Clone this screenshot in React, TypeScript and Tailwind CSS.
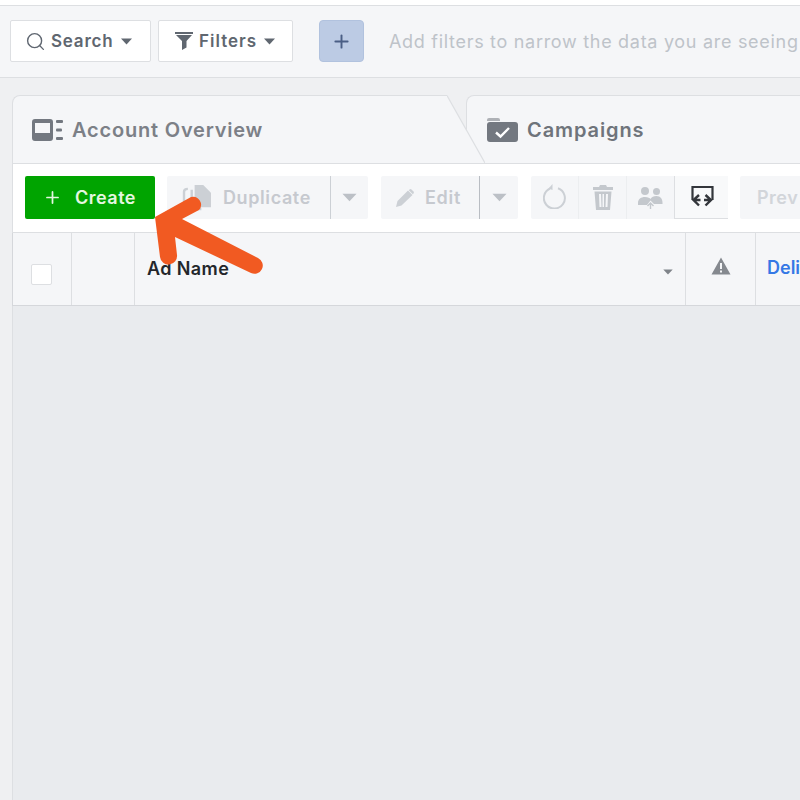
import { Search, Plus } from "lucide-react";

function Caret({ className = "" }: { className?: string }) {
  return (
    <svg viewBox="0 0 12 7" className={className} fill="currentColor">
      <path d="M0.5 0.5h11L6 6.5z" />
    </svg>
  );
}

export default function App() {
  return (
    <div className="relative w-[800px] h-[800px] overflow-hidden bg-[#eff0f2] font-['Inter','Liberation_Sans',sans-serif]">
      <div className="h-[5px] bg-white" />
      {/* filter bar */}
      <div className="h-[73px] bg-[#f5f6f8] border-y border-[#dddfe2] flex items-center pl-[10px] pb-[1px] whitespace-nowrap">
        <button className="w-[141px] h-[42px] shrink-0 bg-white border border-[#dddfe2] rounded-[2px] flex items-center pl-[14px] text-[#606770]">
          <Search className="w-[21px] h-[21px] text-[#5f6670]" strokeWidth={1.6} />
          <span className="ml-[5px] mt-[1px] text-[17px] font-semibold tracking-[0.8px]">Search</span>
          <Caret className="w-[13px] h-[7px] ml-[6px]" />
        </button>
        <button className="ml-[7px] w-[135px] h-[42px] shrink-0 bg-white border border-[#dddfe2] rounded-[2px] flex items-center pl-[16px] text-[#606770]">
          <svg viewBox="0 0 18 18" className="w-[18px] h-[18px]" fill="currentColor">
            <path d="M0 0h18v2H0z" />
            <path d="M1 3h16l-5.500 6v6.500L7 18V9z" />
          </svg>
          <span className="ml-[6px] mt-[1px] text-[17px] font-semibold tracking-[1px]">Filters</span>
          <Caret className="w-[13px] h-[7px] ml-[6px]" />
        </button>
        <button className="ml-[26px] w-[45px] h-[42px] shrink-0 bg-[#bccbe4] border border-[#b1c2de] rounded-[4px] flex items-center justify-center text-[#4b5f85]">
          <Plus className="w-[21px] h-[21px]" strokeWidth={2.2} />
        </button>
        <span className="ml-[25px] text-[18px] text-[#bec3c9] tracking-[0.7px]">Add filters to narrow the data you are seeing</span>
      </div>

      {/* main panel */}
      <div className="ml-[12px] mt-[17px] h-[800px] flex flex-col">
        {/* tabs */}
        <div className="relative h-[69px] flex border-b border-[#dddfe2] shrink-0">
          <div className="w-[435px] shrink-0 bg-[#f5f6f8] border-l border-t border-[#dddfe2] rounded-tl-[8px] flex items-center pl-[19px] whitespace-nowrap">
            <svg viewBox="0 0 32 22" className="w-[32px] h-[22px] text-[#737880]" fill="currentColor">
              <path fillRule="evenodd" d="M3 0h15a3 3 0 0 1 3 3v16a3 3 0 0 1-3 3H3a3 3 0 0 1-3-3V3a3 3 0 0 1 3-3zm0 4v10h15V4z" />
              <rect x="24" y="1" width="7" height="3" rx="1" />
              <rect x="24" y="9.500" width="6" height="3" rx="1" />
              <rect x="24" y="18" width="7" height="3" rx="1" />
            </svg>
            <span className="ml-[8px] text-[20px] font-semibold text-[#7c8087] tracking-[0.8px]">Account Overview</span>
          </div>
          <div className="w-[19px] shrink-0" />
          <div className="flex-1 bg-[#f5f6f8] border-t border-l border-[#dddfe2] rounded-tl-[8px] flex items-center pl-[20px] whitespace-nowrap">
            <svg viewBox="0 0 31 25" className="w-[31px] h-[25px] text-[#737880]" fill="currentColor">
              <path d="M2 1h9a2 2 0 0 1 2 2v1H0V3a2 2 0 0 1 2-2z" fillOpacity="0.55" />
              <path d="M3 5h25a3 3 0 0 1 3 3v14a3 3 0 0 1-3 3H3a3 3 0 0 1-3-3V8a3 3 0 0 1 3-3z" />
              <path d="M9 15.500l4.500 4L22 11" fill="none" stroke="#fff" strokeWidth="2.4" />
            </svg>
            <span className="ml-[9px] text-[20px] font-semibold text-[#6f747b] tracking-[0.9px]">Campaigns</span>
          </div>
          <svg viewBox="0 0 38 68" className="absolute left-[435px] top-0 w-[38px] h-[68px]">
            <path d="M0 0L38 68H0z" fill="#f5f6f8" />
            <path d="M0 0.500L38 68" fill="none" stroke="#dddfe2" strokeWidth="1.2" />
          </svg>
        </div>

        {/* toolbar */}
        <div className="h-[69px] bg-white border-b border-l border-[#dddfe2] flex items-center pl-[12px] pb-[1px] shrink-0 whitespace-nowrap">
          <button className="w-[130px] h-[43px] shrink-0 bg-[#00a400] rounded-[2px] flex items-center pl-[18px] text-[#e4f7e0]">
            <Plus className="w-[19px] h-[19px]" strokeWidth={2.2} />
            <span className="ml-[13px] text-[18px] font-semibold tracking-[0.5px]">Create</span>
          </button>
          <div className="ml-[12px] w-[201px] h-[43px] shrink-0 bg-[#f5f6f8] rounded-[2px] flex items-center text-[#ccd0d5]">
            <div className="w-[164px] h-full border-r border-[#ccd0d5] flex items-center pl-[15px]">
              <svg viewBox="0 0 32 27" className="w-[31px] h-[26px]" fill="currentColor">
                <path d="M13 0h9l8 8v15H13z" />
                <path d="M10 5v20h10" fill="none" stroke="currentColor" strokeWidth="2.5" />
                <path d="M6 4C3 4 2 5 2 7v12c0 2 1 3 4 3" fill="none" stroke="currentColor" strokeWidth="2.5" />
              </svg>
              <span className="ml-[10px] text-[18px] font-semibold text-[#c6c9cf] tracking-[0.6px]">Duplicate</span>
            </div>
            <div className="flex-1 flex justify-center"><Caret className="w-[17px] h-[9px] text-[#bcc0c6]" /></div>
          </div>
          <div className="ml-[13px] w-[137px] h-[43px] shrink-0 bg-[#f5f6f8] rounded-[2px] flex items-center text-[#ccd0d5]">
            <div className="w-[99px] h-full border-r border-[#b9bdc3] flex items-center pl-[14px]">
              <svg viewBox="0 0 20 20" className="w-[20px] h-[20px]" fill="currentColor">
                <path d="M1 19l1.500-6L13 2.500l4.500 4.500L6.500 17.500z" />
                <path d="M14.500 1.500a1.500 1.500 0 0 1 2 0l2 2a1.500 1.500 0 0 1 0 2l-.7.7-4-4z" />
              </svg>
              <span className="ml-[10px] text-[18px] font-semibold text-[#c6c9cf] tracking-[0.7px]">Edit</span>
            </div>
            <div className="flex-1 flex justify-center"><Caret className="w-[17px] h-[9px] text-[#bcc0c6]" /></div>
          </div>
          <div className="ml-[13px] h-[43px] shrink-0 flex bg-[#f5f6f8] rounded-l-[2px] text-[#ccd0d5]">
            <div className="w-[48px] border-r border-[#eceef0] flex items-center justify-center">
              <svg viewBox="0 0 24 26" className="w-[24px] h-[26px] -mt-[3px]" fill="none" stroke="currentColor" strokeWidth="2">
                <path d="M15 5.200A10.500 10.500 0 1 1 7 5.500" />
                <path d="M9.500 1v6l-4-1.500z" fill="currentColor" stroke="none" />
              </svg>
            </div>
            <div className="w-[48px] border-r border-[#eceef0] flex items-center justify-center">
              <svg viewBox="0 0 22 25" className="w-[22px] h-[25px] text-[#c4c8cd]" fill="currentColor">
                <path d="M8 0h6l1 2h6v3H1V2h6z" />
                <path fillRule="evenodd" d="M2.500 6.500h17L18 25H4zM7 9l.5 13h2L9 9zm3.500 0v13h1.500V9zM14 9l-.5 13h2L16 9z" />
              </svg>
            </div>
            <div className="w-[47px] flex items-center justify-center">
              <svg viewBox="0 0 25 24" className="w-[25px] h-[24px] text-[#c4c8cd]" fill="currentColor">
                <circle cx="7" cy="5" r="4" />
                <circle cx="18.500" cy="5.500" r="3.500" />
                <path d="M0 17c0-4 3-6 7-6 3 0 5 1 5.500 2 1-2 3-3 6-3 4 0 6 3 6 7v1H16l-3.500-3.500L9 19H0z" />
                <path d="M9.500 20l3-3 3 3M12.500 17v6" fill="none" stroke="currentColor" strokeWidth="1.400" />
              </svg>
            </div>
            <div className="w-[54px] bg-[#f8f9fa] border-l border-b border-[#dddfe2] flex items-center justify-center">
              <svg viewBox="0 0 26 24" className="w-[26px] h-[24px] text-[#33363b]" fill="none" stroke="currentColor" strokeWidth="2.200">
                <path d="M3.500 15V2h20v13" />
                <path d="M10 10l-5.500 5L10 20.500M16.500 10L22 15l-5.500 5.500M5 15h6.500M15 15h6.500" strokeWidth="2.400" />
              </svg>
            </div>
          </div>
          <div className="ml-[12px] w-[100px] h-[43px] shrink-0 bg-[#f5f6f8] rounded-[2px] flex items-center pl-[17px] text-[18px] font-semibold text-[#d2d5da] tracking-[0.5px]">Prev</div>
        </div>

        {/* table header */}
        <div className="h-[73px] bg-[#f5f6f8] border-b border-l border-[#d5d7db] flex shrink-0 whitespace-nowrap">
          <div className="w-[59px] shrink-0 border-r border-[#dddfe2] flex items-center pl-[18px]">
            <span className="w-[21px] h-[21px] mt-[10px] bg-white border border-[#dddfe2] rounded-[2px]" />
          </div>
          <div className="w-[63px] shrink-0 border-r border-[#dddfe2]" />
          <div className="w-[551px] shrink-0 border-r border-[#dddfe2] flex items-center justify-between pl-[12px] pr-[11px]">
            <span className="text-[18px] font-semibold text-[#23262b] -mt-[1px] tracking-[0.4px]">Ad Name</span>
            <Caret className="w-[12px] h-[6px] text-[#7f8389] mt-[5px]" />
          </div>
          <div className="w-[70px] shrink-0 border-r border-[#dddfe2] flex items-center justify-center">
            <svg viewBox="0 0 20 18" className="w-[20px] h-[18px] -mt-[6px]" fill="#85898f">
              <path fillRule="evenodd" d="M10 0.500L19.500 17.500H0.500zM9 6v6h2V6zm0 7.500v2h2v-2z" />
            </svg>
          </div>
          <div className="pl-[11px] pt-[24px] text-[18px] font-semibold text-[#3578e5] leading-[22px]">Deli</div>
        </div>

        {/* empty table body */}
        <div className="flex-1 bg-[#e9ebee] border-l border-[#dddfe2]" />
      </div>

      {/* arrow annotation */}
      <svg viewBox="0 0 800 800" className="absolute inset-0 w-[800px] h-[800px] pointer-events-none">
        <path d="M155 217L191 197A8 8 0 0 1 199 210L182 219L258 258A8 8 0 0 1 251 273L175 237L177 255A8.500 8.500 0 0 1 160 257z" fill="#f15a22" />
      </svg>
    </div>
  );
}
